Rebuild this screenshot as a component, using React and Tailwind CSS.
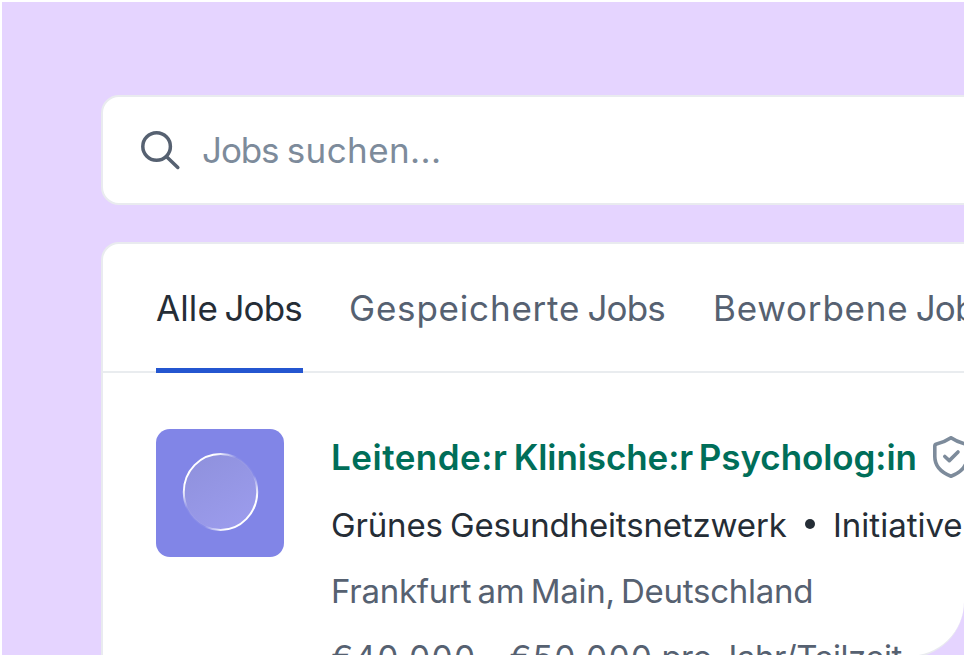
const tabs = [
  { name: 'Alle', active: true, width: 'w-[147px]', tracking: 'tracking-[0.1px]' },
  { name: 'Gespeicherte', active: false, width: 'w-[318px]', tracking: 'tracking-[0.8px]' },
  { name: 'Beworbene', active: false, width: 'w-[280px]', tracking: 'tracking-[0.8px]' }
]

const SearchIcon = () => (
  <svg className="w-[42px] h-[42px] shrink-0" viewBox="0 0 42 42" fill="none" stroke="#566171" strokeWidth={3.5} strokeLinecap="round">
    <circle cx="17.6" cy="17.5" r="13.8" />
    <path d="M27.6 27.7L38.8 38.5" />
  </svg>
)

const ShieldIcon = () => (
  <svg className="w-9 h-[42px] shrink-0" viewBox="0 0 36 42" fill="none" stroke="#7d8b9b" strokeWidth={3.6} strokeLinecap="round" strokeLinejoin="round">
    <path d="M18 1.8C13.5 4.9 8.5 6.8 3.6 7.9C2.4 8.2 1.8 8.9 1.8 10V20.5C1.8 30 7.5 36.2 18 40.2C28.5 36.2 34.2 30 34.2 20.5V10C34.2 8.9 33.6 8.2 32.4 7.9C27.5 6.8 22.5 4.9 18 1.8Z" />
    <path d="M11.8 20.5L16.3 24.6L25 16" />
  </svg>
)

const CompanyLogo = () => (
  <svg className="w-32 h-32 shrink-0" viewBox="0 0 128 128" fill="none">
    <defs>
      <linearGradient id="disc" x1="0.2" y1="0" x2="0.8" y2="1">
        <stop stopColor="#8f91dd" />
        <stop offset="1" stopColor="#9c9ced" />
      </linearGradient>
      <linearGradient id="rim" x1="0" y1="0" x2="1" y2="1">
        <stop stopColor="#fff" />
        <stop offset="0.22" stopColor="#fff" />
        <stop offset="0.38" stopColor="#fff" stopOpacity="0.05" />
        <stop offset="0.62" stopColor="#fff" stopOpacity="0.05" />
        <stop offset="0.78" stopColor="#fff" />
        <stop offset="1" stopColor="#fff" />
      </linearGradient>
    </defs>
    <rect width="128" height="128" rx="14" fill="#8185e7" />
    <ellipse cx="64.5" cy="63" rx="36.7" ry="38" fill="url(#disc)" stroke="url(#rim)" strokeWidth="2" />
  </svg>
)

const App = () => {
  return (
    <div className="w-[964px] h-[655px] overflow-hidden bg-[#e5d4ff] border-l-2 border-t-2 border-white pt-[93px] pl-[99px] font-['Inter',sans-serif]">
      {/* Search */}
      <div className="w-[900px] h-[110px] bg-white border-2 border-[#e9ebef] rounded-[18px] flex items-center pl-9 gap-[21px]">
        <SearchIcon />
        <span className="text-[35px] text-[#7d8b9b] whitespace-nowrap">
          <span className="tracking-[-1.1px]">Jobs</span>
          <span className="tracking-[0.4px] [word-spacing:-2px]"> suchen...</span>
        </span>
      </div>

      {/* Job list */}
      <div className="mt-[37px] w-[863px] h-[416px] overflow-hidden bg-white border-2 border-r-0 border-[#e9ebef] rounded-tl-[18px] rounded-br-[56px]">
        <div className="h-[129px] border-b-2 border-[#e9ecef] flex pl-[53px] gap-[46px]">
          {tabs.map((tab) => (
            <div
              key={tab.name}
              className={`h-[129px] shrink-0 pt-[38px] text-[35px] leading-[52px] whitespace-nowrap [word-spacing:-3.4px] ${tab.width} ${
                tab.active ? 'text-[#252d36] border-b-[5px] border-[#2456d0]' : 'text-[#566171]'
              }`}
            >
              <span className={tab.tracking}>{tab.name} </span>
              <span className="tracking-[-0.9px]">Jobs</span>
            </div>
          ))}
        </div>

        <div className="flex pl-[53px] pt-14 gap-[47px]">
          <CompanyLogo />
          <div className="flex flex-col -mt-[3px] text-[33px] whitespace-nowrap text-[#566171]">
            <div className="flex h-[62px] items-center gap-[15px]">
              <span className="w-[587px] text-[35px] font-semibold text-[#006e59] [word-spacing:-3px]">
                <span className="tracking-[0.5px]">Leitende:r </span>
                <span className="tracking-[-0.08px]">Klinische:r Psycholog:in</span>
              </span>
              <ShieldIcon />
            </div>
            <div className="flex h-[66px] mt-[5px] items-center text-[#252d36]">
              <span className="w-[474px] tracking-[-0.15px] [word-spacing:-2px]">Grünes Gesundheitsnetzwerk</span>
              <span className="w-[10px] h-[10px] -mt-1 rounded-full bg-[#252d36] mr-[18px]" />
              <span>Initiative</span>
            </div>
            <div className="h-[66px] -mt-px leading-[66px] tracking-[-0.25px] [word-spacing:-2.8px]">Frankfurt am Main, Deutschland</div>
            <div className="h-[66px] leading-[66px]">
              <span className="tracking-[1.6px] [word-spacing:-3px]">€40.000 - €50.000 </span>
              <span className="tracking-[-0.5px] [word-spacing:-2px]">pro Jahr/Teilzeit</span>
            </div>
          </div>
        </div>
      </div>
    </div>
  )
}

export default App
